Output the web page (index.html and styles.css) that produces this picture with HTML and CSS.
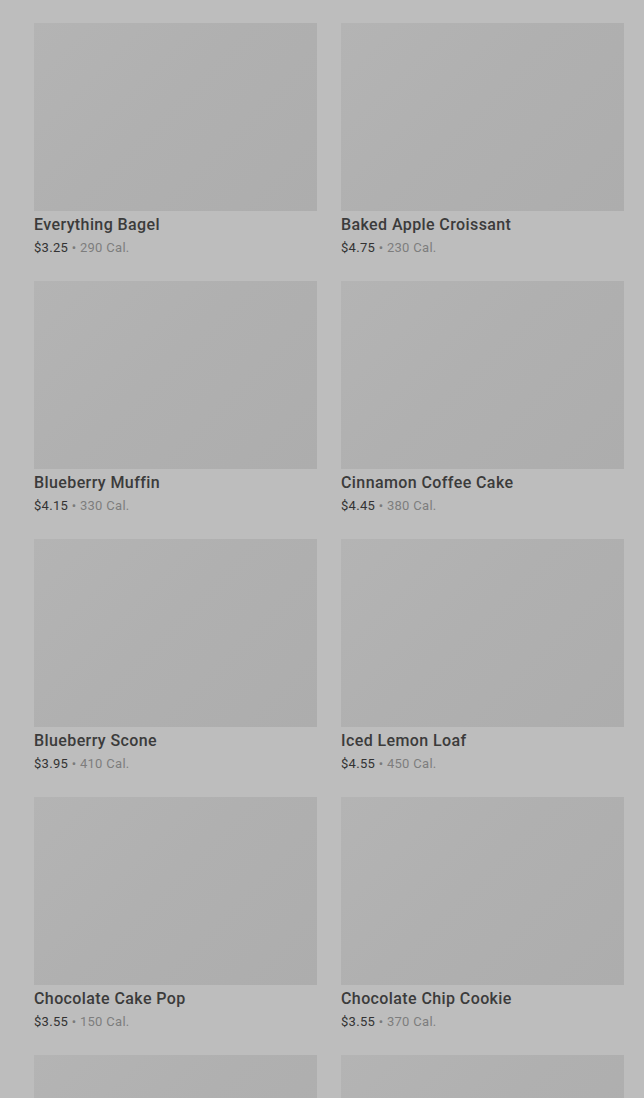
FILE: index.html
```html
<!DOCTYPE html>
<html>
<head>
<meta charset="utf-8">
<link rel="stylesheet" href="styles.css">
</head>
<body>
<main class="grid">
  <div class="card"><div class="thumb"></div><div class="name">Everything Bagel</div><div class="meta"><span class="price">$3.25</span> • <span class="cal">290 Cal.</span></div></div>
  <div class="card"><div class="thumb"></div><div class="name">Baked Apple Croissant</div><div class="meta"><span class="price">$4.75</span> • <span class="cal">230 Cal.</span></div></div>

  <div class="card"><div class="thumb"></div><div class="name">Blueberry Muffin</div><div class="meta"><span class="price">$4.15</span> • <span class="cal">330 Cal.</span></div></div>
  <div class="card"><div class="thumb"></div><div class="name">Cinnamon Coffee Cake</div><div class="meta"><span class="price">$4.45</span> • <span class="cal">380 Cal.</span></div></div>

  <div class="card"><div class="thumb"></div><div class="name">Blueberry Scone</div><div class="meta"><span class="price">$3.95</span> • <span class="cal">410 Cal.</span></div></div>
  <div class="card"><div class="thumb"></div><div class="name">Iced Lemon Loaf</div><div class="meta"><span class="price">$4.55</span> • <span class="cal">450 Cal.</span></div></div>

  <div class="card"><div class="thumb"></div><div class="name">Chocolate Cake Pop</div><div class="meta"><span class="price">$3.55</span> • <span class="cal">150 Cal.</span></div></div>
  <div class="card"><div class="thumb"></div><div class="name">Chocolate Chip Cookie</div><div class="meta"><span class="price">$3.55</span> • <span class="cal">370 Cal.</span></div></div>

  <div class="card"><div class="thumb"></div></div>
  <div class="card"><div class="thumb"></div></div>
</main>
</body>
</html>
```
FILE: styles.css
```css
html, body {
  margin: 0;
  padding: 0;
  background: #bdbdbd;
  overflow: hidden;
  height: 1098px;
}
body {
  font-family: Roboto, "Noto Sans", "Liberation Sans", sans-serif;
}
.grid {
  display: grid;
  grid-template-columns: 283px 283px;
  column-gap: 24px;
  row-gap: 24px;
  padding-left: 34px;
  padding-top: 23px;
}
.card {
  display: flex;
  flex-direction: column;
}
.thumb {
  height: 188px;
  background: linear-gradient(135deg, #b4b4b4 0%, #b0b0b0 45%, #adadad 100%);
}
.name {
  font-size: 16px;
  font-weight: 500;
  line-height: 25px;
  padding-top: 1px;
  color: #3b3b3b;
  letter-spacing: 0.4px;
}
.meta {
  font-size: 13px;
  line-height: 19px;
  padding-top: 1px;
  color: #7a7a7a;
  letter-spacing: 0.3px;
}
.price {
  color: #333333;
}
.cal {
  color: #7d7d7d;
}
```
